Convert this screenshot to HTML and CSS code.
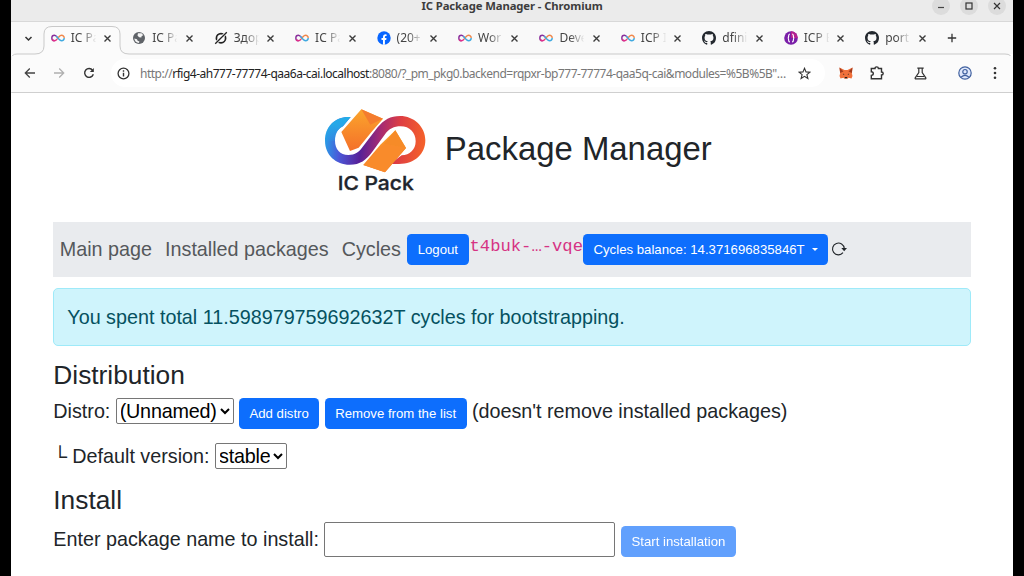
FILE: index.html
```html
<!DOCTYPE html>
<html lang="en">
<head>
<meta charset="utf-8">
<title>IC Package Manager</title>
<link rel="stylesheet" href="styles.css">
</head>
<body>
<svg class="defs" width="0" height="0" aria-hidden="true">
  <defs>
    <symbol id="inf" viewBox="0 0 14 14">
      <path d="M7 7C5.600 5.300 4.900 4.300 3.500 4.300A2.700 2.700 0 0 0 3.500 9.700" fill="none" stroke="#8a2f9c" stroke-width="1.400"/>
      <path d="M1.200 8.500A2.700 2.700 0 0 0 3.500 9.700C4.500 9.700 5.200 9.100 6 8.200" fill="none" stroke="#e0308a" stroke-width="1.400"/>
      <path d="M6 8.200L8 5.800C8.800 4.900 9.500 4.300 10.500 4.300A2.700 2.700 0 0 1 13.200 7" fill="none" stroke="#f0874a" stroke-width="1.400"/>
      <path d="M5.200 5.100L8 8.300C8.800 9.200 9.500 9.700 10.500 9.700A2.700 2.700 0 0 0 13.200 7" fill="none" stroke="#3fa9e0" stroke-width="1.400"/>
    </symbol>
    <symbol id="x" viewBox="0 0 9 9"><path d="M1.500 1.500l6 6M7.500 1.500l-6 6" stroke="#3c3c3c" stroke-width="1.400" fill="none"/></symbol>
    <symbol id="gh" viewBox="0 0 16 16"><path fill="#24292f" d="M8 0C3.580 0 0 3.580 0 8c0 3.540 2.290 6.530 5.470 7.590.4.070.55-.17.55-.38 0-.19-.01-.82-.01-1.490-2.010.37-2.530-.49-2.690-.94-.09-.23-.48-.94-.82-1.130-.28-.15-.68-.52-.01-.53.63-.01 1.080.58 1.230.82.72 1.210 1.870.87 2.330.66.07-.52.28-.87.51-1.070-1.780-.2-3.640-.89-3.640-3.950 0-.87.31-1.590.82-2.150-.08-.2-.36-1.020.08-2.120 0 0 .67-.21 2.200.82.64-.18 1.320-.27 2-.27s1.360.09 2 .27c1.530-1.040 2.200-.82 2.200-.82.44 1.100.16 1.920.08 2.120.51.56.82 1.270.82 2.150 0 3.070-1.870 3.750-3.650 3.950.29.25.54.73.54 1.480 0 1.070-.01 1.930-.01 2.200 0 .21.15.46.55.38A8.010 8.010 0 0 0 16 8c0-4.420-3.580-8-8-8z"/></symbol>
  </defs>
</svg>
<div class="window">
  <header class="titlebar">
    <span class="window-title">IC Package Manager - Chromium</span>
    <div class="controls">
      <span class="control"><svg viewBox="0 0 18 18"><path d="M6 10.500h6" stroke="#444" stroke-width="1.200"/></svg></span>
      <span class="control"><svg viewBox="0 0 18 18"><rect x="6" y="6" width="6" height="6" fill="none" stroke="#333" stroke-width="1.200"/></svg></span>
      <span class="control"><svg viewBox="0 0 18 18"><path d="M6 6l6 6M12 6l-6 6" stroke="#333" stroke-width="1.200"/></svg></span>
    </div>
  </header>

  <nav class="tabs">
    <svg class="tab-outline" viewBox="0 0 1001 38"><path d="M0 38Q0 32 6 32H24Q33 32 33 24V12Q33 4.500 41 4.500H101Q109 4.500 109 12V24Q109 32 118 32H994Q1001 32 1001 38Z" fill="#fbfbfb" stroke="#c9c9c9"/></svg>
    <div class="tab-search"><svg width="9" height="9" viewBox="0 0 9 9"><path d="M1.500 3l3 3 3-3" fill="none" stroke="#333" stroke-width="1.500"/></svg></div>
    <div class="tab"><svg class="fav"><use href="#inf"/></svg><span class="label">IC Pa</span><svg class="close"><use href="#x"/></svg></div>
    <div class="tab"><svg class="fav" viewBox="0 0 14 14"><circle cx="7" cy="7" r="6" fill="#5f6368"/><path d="M2.200 7.500L5 8.300l.6 1.500 1.800.6-.5 1.700Q3 11.500 2.200 7.500ZM6 2.300h3.500l1.800 2-1.600.7-.4 1.600-2.200-.4L5.500 4.500Z" fill="#f4f4f4"/></svg><span class="label">IC Pa</span><svg class="close"><use href="#x"/></svg></div>
    <div class="tab"><svg class="fav" viewBox="0 0 14 14"><circle cx="7" cy="7.200" r="4.600" fill="none" stroke="#222" stroke-width="1.700"/><path d="M1.200 12.800L12.800 1.200" stroke="#fbfbfb" stroke-width="3"/><path d="M1.200 12.800L12.800 1.200" stroke="#222" stroke-width="1.300"/></svg><span class="label">Здор</span><svg class="close"><use href="#x"/></svg></div>
    <div class="tab"><svg class="fav"><use href="#inf"/></svg><span class="label">IC Pa</span><svg class="close"><use href="#x"/></svg></div>
    <div class="tab"><svg class="fav" viewBox="0 0 14 14"><circle cx="7" cy="7" r="6.700" fill="#0866ff"/><path d="M6 13.700V9H4.500V7H6V5.800Q6 3.300 8.300 3.300L9.600 3.400V5.100H8.800Q7.900 5.100 7.900 6V7H9.500L9.200 9H7.900V13.700Z" fill="#fff"/></svg><span class="label">(20+</span><svg class="close"><use href="#x"/></svg></div>
    <div class="tab"><svg class="fav"><use href="#inf"/></svg><span class="label">Wor</span><svg class="close"><use href="#x"/></svg></div>
    <div class="tab"><svg class="fav"><use href="#inf"/></svg><span class="label">Deve</span><svg class="close"><use href="#x"/></svg></div>
    <div class="tab"><svg class="fav"><use href="#inf"/></svg><span class="label">ICP I</span><svg class="close"><use href="#x"/></svg></div>
    <div class="tab"><svg class="fav"><use href="#gh"/></svg><span class="label">dfini</span><svg class="close"><use href="#x"/></svg></div>
    <div class="tab"><svg class="fav" viewBox="0 0 14 14"><circle cx="7" cy="7" r="6.800" fill="#7a1fa8"/><path d="M7 .2A6.800 6.800 0 0 1 13.800 7L7 7Z" fill="#b5208f"/><path d="M6 3Q4.600 3 4.600 5T3.700 7Q4.600 7 4.600 9T6 11M8 3Q9.400 3 9.400 5T10.300 7Q9.400 7 9.400 9T8 11" fill="none" stroke="#fff" stroke-width="1.200"/></svg><span class="label">ICP E</span><svg class="close"><use href="#x"/></svg></div>
    <div class="tab"><svg class="fav"><use href="#gh"/></svg><span class="label">port</span><svg class="close"><use href="#x"/></svg></div>
    <svg class="new-tab" viewBox="0 0 10 10"><path d="M5 .8v8.400M.8 5h8.400" stroke="#333" stroke-width="1.300"/></svg>
  </nav>

  <div class="toolbar">
    <svg class="tool back" viewBox="0 0 12 12"><path d="M11 6H1.500M5.800 1.500L1.300 6l4.500 4.500" fill="none" stroke="#444" stroke-width="1.300"/></svg>
    <svg class="tool forward" viewBox="0 0 12 12"><path d="M1 6h9.500M6.200 1.500L10.700 6l-4.500 4.500" fill="none" stroke="#b0b0b0" stroke-width="1.300"/></svg>
    <svg class="tool reload" viewBox="0 0 12 12"><path d="M10.300 7.200A4.400 4.400 0 1 1 9.600 3.300" fill="none" stroke="#333" stroke-width="1.400"/><path d="M10.800 1v4H6.800Z" fill="#333"/></svg>
    <div class="omnibox">
      <svg class="info" viewBox="0 0 12 12"><circle cx="6" cy="6" r="5" fill="none" stroke="#333" stroke-width="1.200"/><path d="M6 5.400v3.300M6 3v1.300" stroke="#333" stroke-width="1.300"/></svg>
      <span class="url"><span class="scheme">http://</span><span class="host">rfig4-ah777-77774-qaa6a-cai.localhost</span><span class="path">:8080/?_pm_pkg0.backend=rqpxr-bp777-77774-qaa5q-cai&amp;modules=%5B%5B"…</span></span>
      <svg class="star" viewBox="0 0 13 13"><path d="M6.500 1.300l1.500 3.600 3.900.3-3 2.500 1 3.800-3.400-2.100-3.400 2.100 1-3.800-3-2.500 3.900-.3Z" fill="none" stroke="#333" stroke-width="1.100"/></svg>
    </div>
    <svg class="fox" viewBox="0 0 14 12"><path d="M.5.5L5.500 3h3L13.500.5l-.6 6 .6 2.500-1 2.500-3-.8-1 1H5.500l-1-1-3 .8-1-2.500.6-2.500Z" fill="#f0703a"/><path d="M.5.5l4 4L1.200 6ZM13.500.5l-4 4L12.800 6Z" fill="#a23a1c"/><path d="M4 6.500l1.500 1-1.200.2ZM10 6.500l-1.500 1 1.200.2ZM5.800 10h2.400v1.300H5.800Z" fill="#222"/></svg>
    <svg class="puzzle" viewBox="0 0 14 14"><path d="M1.300 2.500H5Q5 .9 6.700.9T8.400 2.500H11.500V6Q13.200 6 13.200 7.500T11.500 9V12.700H1.300V9.400Q3.300 9.400 3.300 7.600T1.300 5.800Z" fill="none" stroke="#333" stroke-width="1.400"/></svg>
    <svg class="flask" viewBox="0 0 13 13"><path d="M3.300 1.200h6.400M4.800 1.200V5.500L1.200 10.800Q.8 11.800 1.900 11.800H11.100Q12.200 11.800 11.800 10.800L8.200 5.500V1.200M3 9.500h7" fill="none" stroke="#333" stroke-width="1.200"/></svg>
    <svg class="profile" viewBox="0 0 14 14"><circle cx="7" cy="7" r="6.200" fill="#dfe8fb" stroke="#41619f" stroke-width="1.200"/><circle cx="7" cy="5.700" r="2.200" fill="none" stroke="#41619f" stroke-width="1.200"/><path d="M3 11.300Q7 7.500 11 11.300" fill="none" stroke="#41619f" stroke-width="1.200"/></svg>
    <svg class="menu" viewBox="0 0 4 14"><g fill="#333"><circle cx="2" cy="2.300" r="1.300"/><circle cx="2" cy="7" r="1.300"/><circle cx="2" cy="11.700" r="1.300"/></g></svg>
  </div>

  <main class="page">
    <div class="brand">
      <svg class="logo" viewBox="0 0 390 330" role="img">
        <defs>
          <linearGradient id="rib" gradientUnits="userSpaceOnUse" x1="45" y1="80" x2="345" y2="110"><stop offset="0" stop-color="#25a5e8"/><stop offset=".17" stop-color="#4b58d8"/><stop offset=".38" stop-color="#572098"/><stop offset=".56" stop-color="#a52a72"/><stop offset=".75" stop-color="#de3e43"/><stop offset="1" stop-color="#f4602b"/></linearGradient>
          <linearGradient id="glow" gradientUnits="userSpaceOnUse" x1="130" y1="60" x2="60" y2="150"><stop offset="0" stop-color="#20b4ea"/><stop offset=".5" stop-color="#20b4ea" stop-opacity=".8"/><stop offset="1" stop-color="#20b4ea" stop-opacity="0"/></linearGradient>
          <linearGradient id="cube" x1="0" y1="0" x2="0" y2="1"><stop offset="0" stop-color="#fba52c"/><stop offset="1" stop-color="#f4702a"/></linearGradient>
        </defs>
        <path d="M122 66C76 63 45 94 45 137C45 180 78 209 119 209C151 209 168 195 187 170L224 119C237 101 252 94 272 94C299 94 317 113 317 139C317 164 299 181 275 181L240 207H267C314 207 346 177 346 136C346 95 312 63 270 63C241 63 222 74 203 97L160 153C148 171 135 180 115 180C90 180 75 162 75 137C75 114 84 102 99 94Z" fill="url(#rib)"/>
        <path d="M122 66C76 63 45 94 45 137H75C75 114 84 102 99 94Z" fill="url(#glow)"/>
        <path d="M154 43L219 71L185 110L146 158L120 168L94 111Z" fill="url(#cube)"/>
        <path d="M154 43L219 71L181 89Z" fill="#f47c2e"/>
        <path d="M256 106L288 159L225 232L160 210L211 149Z" fill="url(#cube)"/>
        <path d="M256 106L288 159L222 146Z" fill="#f68b28"/>
        <path d="M222 146L288 159L225 232L160 210Z" fill="#f98b2b"/>
        <text x="83" y="286" textLength="228" lengthAdjust="spacingAndGlyphs" class="logo-text">IC Pack</text>
      </svg>
      <h1 class="brand-title">Package Manager</h1>
    </div>

    <nav class="navbar">
      <a class="nav-link">Main page</a>
      <a class="nav-link">Installed packages</a>
      <a class="nav-link">Cycles</a>
      <button class="btn">Logout</button>
      <code class="principal">t4buk-…-vqe</code>
      <button class="btn balance">Cycles balance: 14.371696835846T<span class="caret"></span></button>
      <svg class="refresh" viewBox="0 0 16 16"><path d="M12 11.700A5.900 5.900 0 1 1 13.300 7.500" fill="none" stroke="#212529" stroke-width="1.100"/><path d="M10.300 6.900H16L13.200 10.200Z" fill="#212529"/></svg>
    </nav>

    <div class="alert">You spent total 11.598979759692632T cycles for bootstrapping.</div>

    <h2 class="heading">Distribution</h2>
    <div class="row distro">
      <label>Distro:</label>
      <select class="select distro-select"><option>(Unnamed)</option></select>
      <button class="btn">Add distro</button>
      <button class="btn">Remove from the list</button>
      <span>(doesn't remove installed packages)</span>
    </div>
    <div class="row version">
      <span class="branch">└</span>
      <label>Default version:</label>
      <select class="select version-select"><option>stable</option></select>
    </div>
    <h2 class="heading">Install</h2>
    <div class="row install">
      <label>Enter package name to install:</label>
      <input class="package" type="text">
      <button class="btn disabled" disabled>Start installation</button>
    </div>
  </main>
</div>
</body>
</html>
```
FILE: styles.css
```css
* { box-sizing: border-box; }
body {
  margin: 0;
  width: 1024px;
  height: 576px;
  overflow: hidden;
  background: #000;
  font-family: "Liberation Sans", Arial, sans-serif;
  font-size: 19.75px;
  color: #212529;
}
svg { display: block; flex: none; }
.defs { position: absolute; }
.window {
  width: 1001.5px;
  height: 576px;
  margin-left: 11.3px;
  background: #fff;
  overflow: hidden;
  display: flex;
  flex-direction: column;
}
.titlebar, .tabs, .toolbar { font-family: "Noto Sans", sans-serif; flex: none; }

.titlebar {
  height: 22px;
  position: relative;
  display: flex;
  justify-content: center;
  background: #ebebeb;
  border-bottom: 1px solid #d8d8d8;
}
.window-title {
  font-size: 11.3px;
  font-weight: 700;
  line-height: 12px;
  color: #3d3d3d;
  letter-spacing: -0.1px;
  white-space: nowrap;
}
.controls { position: absolute; right: 6.5px; top: -3px; display: flex; gap: 10px; }
.control { width: 18px; height: 18px; border-radius: 50%; background: #dcdcdc; }

.tabs {
  height: 32px;
  position: relative;
  display: flex;
  align-items: center;
  background: #f9f9f9;
}
.tab-outline { position: absolute; left: 0; top: 0; width: 1001px; height: 38px; }
.tab-search { width: 33.5px; padding-left: 12.5px; position: relative; }
.tab {
  width: 81.45px;
  flex: none;
  position: relative;
  display: flex;
  align-items: center;
  padding-left: 6px;
}
.fav { width: 14px; height: 14px; }
.label {
  width: 31px;
  margin-left: 6px;
  white-space: nowrap;
  font-size: 12px;
  line-height: 18px;
  color: #444;
  mask-image: linear-gradient(to right, #000 35%, transparent 82%);
}
.close { width: 9px; height: 9px; margin-left: 1.5px; }
.new-tab { width: 10px; height: 10px; margin-left: 6px; position: relative; }

.toolbar {
  height: 39px;
  position: relative;
  display: flex;
  align-items: center;
  background: #fbfbfb;
  border-bottom: 1px solid #cfcfcf;
  padding-left: 12.7px;
  clip-path: inset(2px 0 0 0);
}
.tool { width: 12px; height: 12px; }
.forward, .reload { margin-left: 17.5px; }
.omnibox {
  width: 714px;
  height: 28px;
  margin-left: 16px;
  padding-left: 6px;
  border-radius: 14px;
  background: #fff;
  display: flex;
  align-items: center;
}
.info { width: 13px; height: 13px; }
.url {
  width: 648px;
  margin-left: 10px;
  font-size: 12px;
  letter-spacing: -0.49px;
  white-space: nowrap;
  color: #777;
}
.host { color: #222; }
.star { width: 13px; height: 13px; margin-left: 10px; }
.fox { width: 14px; height: 12px; margin-left: 14px; }
.puzzle { width: 14px; height: 14px; margin-left: 17px; }
.flask { width: 13px; height: 13px; margin-left: 30px; }
.profile { width: 14px; height: 14px; margin-left: 31px; }
.menu { width: 4px; height: 14px; margin-left: 21px; }

.page {
  width: 918px;
  margin-left: 42px;
  padding-top: 2px;
  display: flex;
  flex-direction: column;
}
.brand {
  height: 126.5px;
  display: flex;
  align-items: flex-start;
  margin-left: 256.7px;
}
.logo { width: 130px; height: 110px; }
.logo-text {
  font-family: Inter, sans-serif;
  font-size: 57px;
  font-weight: 500;
  fill: #20242c;
  stroke: #20242c;
  stroke-width: 1px;
}
.brand-title {
  margin: 34px 0 0 4.8px;
  font-size: 32.9px;
  line-height: 40px;
  font-weight: 400;
}
.navbar {
  height: 55.5px;
  display: flex;
  align-items: center;
  padding-left: 6.5px;
  background: #e9ebee;
}
.nav-link { margin-right: 13px; color: #55585b; white-space: nowrap; }
.nav-link:nth-child(3) { margin-right: 6.3px; }
.btn {
  height: 31px;
  padding: 0 10.5px;
  border: 0;
  border-radius: 4.5px;
  background: #0d6efd;
  color: #fff;
  font: 13.2px "Liberation Sans", Arial, sans-serif;
  white-space: nowrap;
  flex: none;
}
.principal {
  font: 17.2px/20px "Liberation Mono", monospace;
  color: #d63384;
  margin-top: -5px;
  padding-left: 1px;
}
.balance { display: flex; align-items: center; }
.caret {
  margin-left: 7px;
  border: 3.5px solid transparent;
  border-top-color: #fff;
  border-bottom: 0;
}
.refresh { width: 16px; height: 16px; margin-left: 3px; }
.alert {
  height: 58px;
  margin-top: 11px;
  padding-left: 13px;
  border: 1px solid #9eeaf9;
  border-radius: 5px;
  background: #cff4fc;
  color: #055160;
  line-height: 56px;
}
.heading { margin: 0; font-size: 26.3px; line-height: 32px; font-weight: 400; }
.alert + .heading { margin-top: 12.5px; }
.row { display: flex; align-items: center; white-space: nowrap; }
.distro { height: 41.5px; gap: 5.3px; }
.distro .btn { margin-top: 4px; }
.select {
  height: 26px;
  padding: 0;
  border: 1px solid #767676;
  border-radius: 2px;
  background: #fff;
  color: #000;
  font: 19.75px "Liberation Sans", Arial, sans-serif;
  text-indent: -1px;
  letter-spacing: -0.2px;
}
.distro-select { width: 118px; }
.version-select { width: 72px; }
.version { height: 48px; gap: 5.5px; }
.branch { margin-right: -0.5px; }
.version + .heading { margin-top: 4px; }
.install { height: 44px; gap: 5.5px; margin-top: 1px; }
.package {
  width: 291px;
  height: 35px;
  border: 1px solid #767676;
  border-radius: 2px;
  font: inherit;
}
.install .btn { margin-top: 4px; }
.disabled { opacity: 0.65; }
```
